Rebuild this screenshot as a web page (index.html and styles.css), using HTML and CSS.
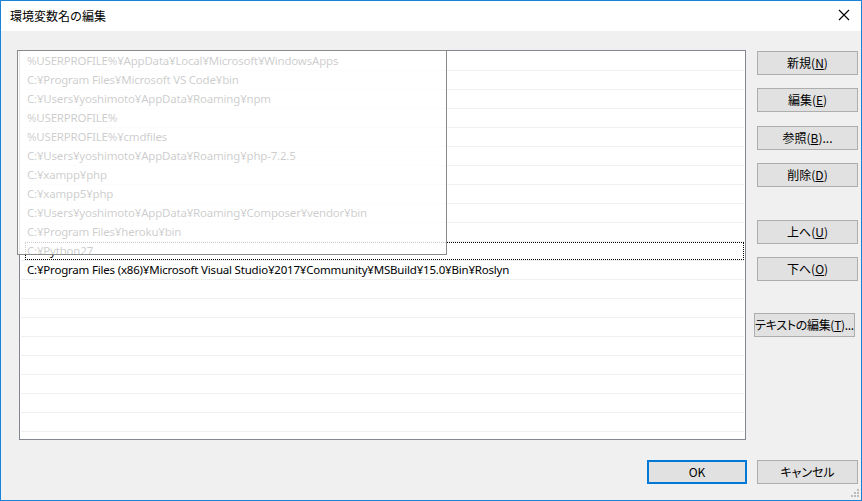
FILE: index.html
```html
<!DOCTYPE html>
<html lang="ja">
<head>
<meta charset="utf-8">
<title>環境変数名の編集</title>
<link rel="stylesheet" href="styles.css">
</head>
<body>
<div class="window">
  <div class="titlebar">
    <span class="title">環境変数名の編集</span>
    <svg class="close" width="12" height="12" viewBox="0 0 12 12"><path d="M1 1L11 11M11 1L1 11" stroke="#000" stroke-width="1.1" fill="none"/></svg>
  </div>
  <div class="body">
    <div class="main">
      <div class="list">
        <div class="row"><span class="label">%USERPROFILE%¥AppData¥Local¥Microsoft¥WindowsApps</span></div>
        <div class="row"><span class="label">C:¥Program Files¥Microsoft VS Code¥bin</span></div>
        <div class="row"><span class="label">C:¥Users¥yoshimoto¥AppData¥Roaming¥npm</span></div>
        <div class="row"><span class="label">%USERPROFILE%</span></div>
        <div class="row"><span class="label">%USERPROFILE%¥cmdfiles</span></div>
        <div class="row"><span class="label">C:¥Users¥yoshimoto¥AppData¥Roaming¥php-7.2.5</span></div>
        <div class="row"><span class="label">C:¥xampp¥php</span></div>
        <div class="row"><span class="label">C:¥xampp5¥php</span></div>
        <div class="row"><span class="label">C:¥Users¥yoshimoto¥AppData¥Roaming¥Composer¥vendor¥bin</span></div>
        <div class="row"><span class="label">C:¥Program Files¥heroku¥bin</span></div>
        <div class="row focused"><span class="label">C:¥Python27</span></div>
        <div class="row"><span class="label">C:¥Program Files (x86)¥Microsoft Visual Studio¥2017¥Community¥MSBuild¥15.0¥Bin¥Roslyn</span></div>
        <div class="row"></div>
        <div class="row"></div>
        <div class="row"></div>
        <div class="row"></div>
        <div class="row"></div>
        <div class="row"></div>
        <div class="row"></div>
        <div class="row"></div>
        <div class="row"></div>
      </div>
      <div class="side">
        <button class="btn">新規(<u>N</u>)</button>
        <button class="btn g13">編集(<u>E</u>)</button>
        <button class="btn g14">参照(<u>B</u>)...</button>
        <button class="btn g13">削除(<u>D</u>)</button>
        <button class="btn g33">上へ(<u>U</u>)</button>
        <button class="btn g13">下へ(<u>O</u>)</button>
        <button class="btn g32 shift">テキストの編集(<u>T</u>)...</button>
      </div>
    </div>
    <div class="footer">
      <button class="btn ok">OK</button>
      <button class="btn cancel">キャンセル</button>
    </div>
  </div>
  <div class="drag"></div>
  <svg class="grip" width="9" height="9" viewBox="0 0 9 9">
    <rect x="6" y="0" width="2" height="2" fill="#bcbcbc"/>
    <rect x="3" y="3" width="2" height="2" fill="#bcbcbc"/>
    <rect x="6" y="3" width="2" height="2" fill="#bcbcbc"/>
    <rect x="0" y="6" width="2" height="2" fill="#bcbcbc"/>
    <rect x="3" y="6" width="2" height="2" fill="#bcbcbc"/>
    <rect x="6" y="6" width="2" height="2" fill="#bcbcbc"/>
  </svg>
</div>
</body>
</html>
```

FILE: styles.css
```css
* { box-sizing: border-box; }
html, body { margin: 0; padding: 0; }
body {
  width: 862px;
  height: 501px;
  overflow: hidden;
  font-family: "Noto Sans CJK JP", "Noto Sans", sans-serif;
  font-size: 12px;
  color: #000;
  font-feature-settings: "palt";
}
.window {
  position: relative;
  width: 862px;
  height: 501px;
  border: 1px solid #1883d7;
  background: #f0f0f0;
  display: flex;
  flex-direction: column;
}
.titlebar {
  height: 30px;
  background: #fff;
  display: flex;
  align-items: center;
  justify-content: space-between;
  padding: 0 10px 1px 9px;
  flex: none;
}
.title { font-size: 12px; line-height: 1; font-feature-settings: normal; }
.close { margin-right: 1px; margin-top: -2px; }
.body {
  flex: 1;
  display: flex;
  flex-direction: column;
  padding: 19px 3px 0 18px;
}
.main {
  display: flex;
  gap: 11px;
  height: 390px;
}
.list {
  width: 727px;
  height: 390px;
  border: 1px solid #828790;
  background: #fff;
  padding: 1px 1px 0 1px;
  overflow: hidden;
}
.row {
  height: 19px;
  border-bottom: 1px solid #f0f0f0;
  padding: 0 0 0 4px;
  display: flex;
}
.label {
  flex: 1;
  border: 1px dotted transparent;
  padding-left: 1px;
  line-height: 16px;
  height: 18px;
  white-space: nowrap;
  font-family: "Noto Sans", "Noto Sans CJK JP", sans-serif;
  font-size: 11.5px;
  letter-spacing: -0.2px;
  font-feature-settings: normal;
}
.focused .label { border-color: #000; }
.side {
  width: 101px;
  display: flex;
  flex-direction: column;
  padding-top: 1px;
}
.btn {
  width: 101px;
  height: 24px;
  background: #e1e1e1;
  border: 1px solid #adadad;
  font-family: "Noto Sans CJK JP", "Noto Sans", sans-serif;
  font-size: 12px;
  font-feature-settings: "palt";
  color: #000;
  padding: 0;
  margin: 0;
  line-height: 20px;
  text-align: center;
  white-space: nowrap;
}
.btn u { text-underline-offset: 1px; }
.g13 { margin-top: 13px; }
.g14 { margin-top: 14px; }
.g33 { margin-top: 33px; }
.g32 { margin-top: 32px; }
.shift { margin-left: -3px; letter-spacing: -0.3px; }
.footer {
  display: flex;
  justify-content: flex-end;
  gap: 10px;
  margin-top: 20px;
}
.ok {
  width: 100px;
  border: 2px solid #0078d7;
}
.drag {
  position: absolute;
  left: 16px;
  top: 49px;
  width: 430px;
  height: 205px;
  border: 1px solid #8a8a8a;
  background: rgba(255, 255, 255, 0.8);
}
.grip {
  position: absolute;
  right: 1px;
  bottom: 2px;
}
```
